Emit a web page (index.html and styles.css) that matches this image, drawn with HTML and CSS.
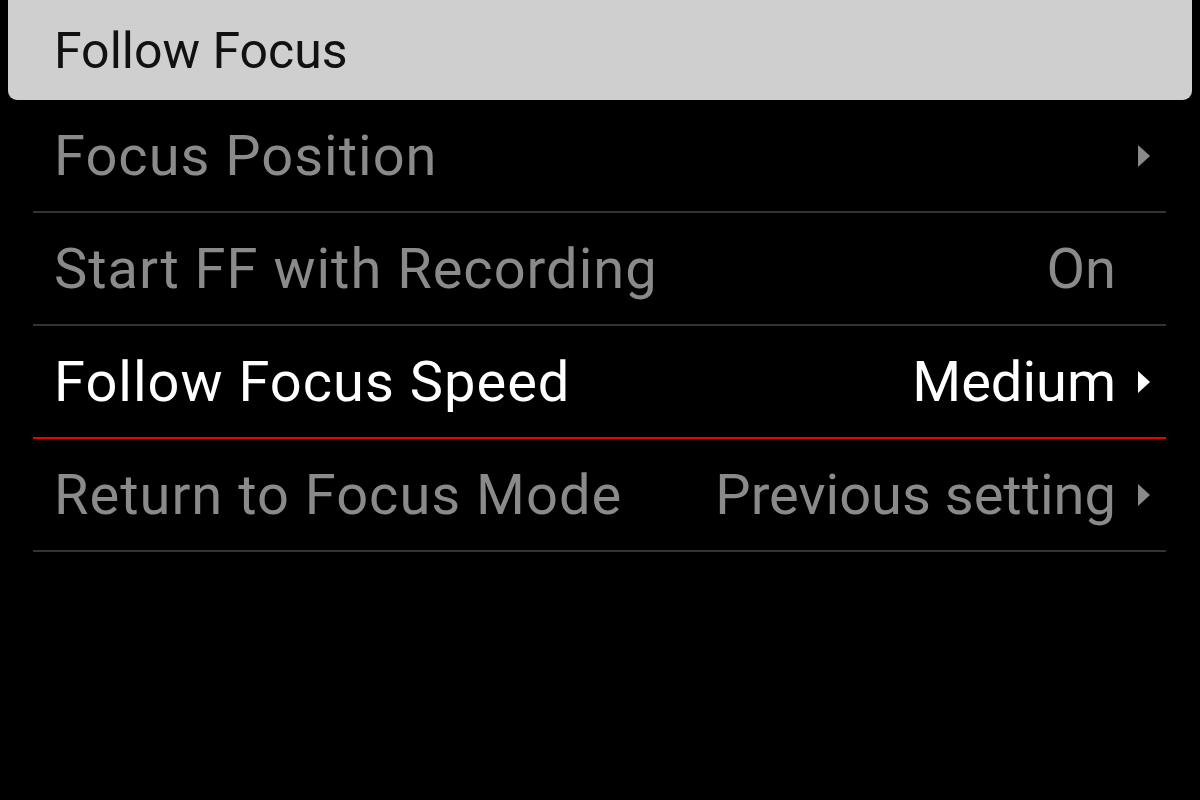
FILE: index.html
```html
<!DOCTYPE html>
<html lang="en">
    <head>
        <meta charset="UTF-8">
        <meta name="viewport" content="width=device-width, initial-scale=1.0">
        <title>Follow Focus</title>
        <link rel="stylesheet" href="styles.css">
    </head>
    <body>
        <div class="menu-title">Follow Focus</div>

        <ul class="menu-list">
            <li class="menu-row">
                <span class="label">Focus Position</span>
                <span class="value"></span>
                <span class="arrow"></span>
            </li>
            <li class="menu-row">
                <span class="label">Start FF with Recording</span>
                <span class="value">On</span>
                <span class="arrow hidden"></span>
            </li>
            <li class="menu-row active">
                <span class="label">Follow Focus Speed</span>
                <span class="value">Medium</span>
                <span class="arrow"></span>
            </li>
            <li class="menu-row">
                <span class="label">Return to Focus Mode</span>
                <span class="value">Previous setting</span>
                <span class="arrow"></span>
            </li>
        </ul>
    </body>
</html>
```

FILE: styles.css
```css
body {
    margin: 0;
    background: #000;
    font-family: Roboto, "DejaVu Sans", sans-serif;
    height: 800px;
    overflow: hidden;
}
.menu-title {
    margin: 0 8px;
    height: 100px;
    box-sizing: border-box;
    padding: 2px 0 0 46px;
    display: flex;
    align-items: center;
    background: #cfcfcf;
    border-radius: 0 0 9px 9px;
    color: #111;
    font-size: 50px;
}
.menu-list {
    list-style: none;
    margin: 0 34px 0 33px;
    padding: 0;
}
.menu-row {
    height: 113px;
    box-sizing: border-box;
    display: flex;
    align-items: center;
    padding: 0 16px 0 21px;
    border-bottom: 2px solid #333;
    color: #8a8a8a;
    font-size: 56px;
    letter-spacing: 1px;
}
.menu-row.active {
    color: #fff;
    border-bottom-color: #ee0000;
}
.label {
    flex: 1;
}
.value {
    letter-spacing: 0;
}
.arrow {
    width: 0;
    height: 0;
    margin-left: 22px;
    border-top: 11px solid transparent;
    border-bottom: 11px solid transparent;
    border-left: 12px solid #8a8a8a;
}
.active .arrow {
    border-left-color: #fff;
}
.arrow.hidden {
    visibility: hidden;
}
```
